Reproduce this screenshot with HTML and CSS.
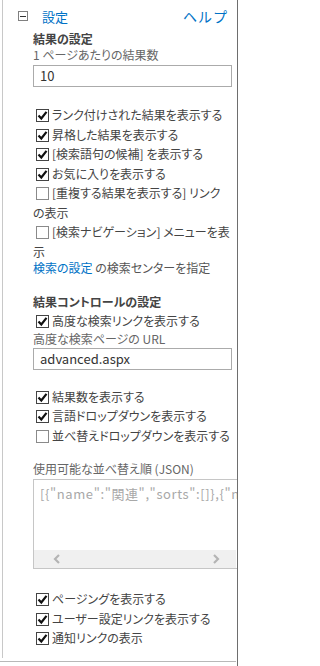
FILE: index.html
```html
<!DOCTYPE html>
<html lang="ja">
<head>
<meta charset="utf-8">
<title>設定</title>
<link rel="stylesheet" href="styles.css">
</head>
<body>
<div class="frame">
  <div class="main">
    <div class="panel">
      <div class="header">
        <span class="toggle"><span class="minus"></span></span>
        <a class="title">設定</a>
        <a class="help">ヘルプ</a>
      </div>
      <div class="section">
        <div class="heading">結果の設定</div>
        <div class="label">1 ページあたりの結果数</div>
        <div class="input">10</div>
        <div class="checks first">
          <div class="row"><span class="cb on"><svg viewBox="0 0 11 11"><path d="M1.5 5.5 L4.3 8.5 L9.5 1.8"/></svg></span>ランク付けされた結果を表示する</div>
          <div class="row"><span class="cb on"><svg viewBox="0 0 11 11"><path d="M1.5 5.5 L4.3 8.5 L9.5 1.8"/></svg></span>昇格した結果を表示する</div>
          <div class="row"><span class="cb on"><svg viewBox="0 0 11 11"><path d="M1.5 5.5 L4.3 8.5 L9.5 1.8"/></svg></span>[検索語句の候補] を表示する</div>
          <div class="row"><span class="cb on"><svg viewBox="0 0 11 11"><path d="M1.5 5.5 L4.3 8.5 L9.5 1.8"/></svg></span>お気に入りを表示する</div>
          <div class="row"><span class="cb"></span>[重複する結果を表示する] リンクの表示</div>
          <div class="row"><span class="cb"></span>[検索ナビゲーション] メニューを表示</div>
        </div>
        <div class="linkrow"><a class="link">検索の設定</a> の検索センターを指定</div>

        <div class="heading second">結果コントロールの設定</div>
        <div class="checks tight">
          <div class="row"><span class="cb on"><svg viewBox="0 0 11 11"><path d="M1.5 5.5 L4.3 8.5 L9.5 1.8"/></svg></span>高度な検索リンクを表示する</div>
        </div>
        <div class="label">高度な検索ページの URL</div>
        <div class="input url">advanced.aspx</div>
        <div class="checks mid">
          <div class="row"><span class="cb on"><svg viewBox="0 0 11 11"><path d="M1.5 5.5 L4.3 8.5 L9.5 1.8"/></svg></span>結果数を表示する</div>
          <div class="row"><span class="cb on"><svg viewBox="0 0 11 11"><path d="M1.5 5.5 L4.3 8.5 L9.5 1.8"/></svg></span>言語ドロップダウンを表示する</div>
          <div class="row"><span class="cb"></span>並べ替えドロップダウンを表示する</div>
        </div>
        <div class="label json-label">使用可能な並べ替え順 (JSON)</div>
        <div class="textarea">
          <div class="json">[{"name":"関連","sorts":[]},{"n</div>
          <div class="hscroll">
            <svg class="arrow left" viewBox="0 0 8 10"><path d="M6 1 L2 5 L6 9"/></svg>
            <svg class="arrow right" viewBox="0 0 8 10"><path d="M2 1 L6 5 L2 9"/></svg>
          </div>
        </div>
        <div class="checks last">
          <div class="row"><span class="cb on"><svg viewBox="0 0 11 11"><path d="M1.5 5.5 L4.3 8.5 L9.5 1.8"/></svg></span>ページングを表示する</div>
          <div class="row"><span class="cb on"><svg viewBox="0 0 11 11"><path d="M1.5 5.5 L4.3 8.5 L9.5 1.8"/></svg></span>ユーザー設定リンクを表示する</div>
          <div class="row"><span class="cb on"><svg viewBox="0 0 11 11"><path d="M1.5 5.5 L4.3 8.5 L9.5 1.8"/></svg></span>通知リンクの表示</div>
        </div>
      </div>
    </div>
    <div class="separator"></div>
  </div>
  <div class="edge"></div>
</div>
</body>
</html>
```
FILE: styles.css
```css
html, body {
  margin: 0;
  padding: 0;
  background: #fff;
}
body {
  font-family: "Noto Sans CJK JP", "Noto Sans", sans-serif;
  font-size: 12px;
  color: #444;
  font-feature-settings: "palt";
}
.frame {
  display: flex;
  width: 239px;
  height: 666px;
  overflow: hidden;
}
.main {
  width: 237px;
  overflow: hidden;
  display: flex;
  flex-direction: column;
}
.edge {
  width: 1px;
  background: #6e6e6e;
}
.panel {
  margin-left: 2px;
  border-left: 1px solid #c8c8c8;
  height: 658px;
  box-sizing: border-box;
}
.separator {
  margin-top: 3px;
  width: 236px;
  border-top: 1px solid #b8b8b8;
}
.header {
  display: flex;
  align-items: center;
  padding: 7px 10px 0 15px;
  height: 18px;
}
.toggle {
  width: 10px;
  height: 10px;
  box-sizing: border-box;
  border: 1px solid #808080;
  display: flex;
  align-items: center;
  justify-content: center;
}
.minus {
  width: 6px;
  height: 1px;
  background: #333;
}
.title {
  margin-left: 14px;
  color: #0072c6;
  font-size: 13px;
}
.help {
  margin-left: auto;
  color: #0072c6;
  font-size: 14px;
  font-feature-settings: normal;
  letter-spacing: 1px;
  margin-right: -1px;
}
.section {
  padding-left: 30px;
}
.heading {
  font-weight: bold;
  line-height: 16px;
  margin-top: 6px;
  color: #444;
}
.heading.second {
  margin-top: 19px;
}
.label {
  line-height: 16px;
  color: #666;
}
.input {
  margin-top: 2px;
  width: 199px;
  height: 22px;
  box-sizing: border-box;
  border: 1px solid #ababab;
  padding-left: 6px;
  font-size: 13px;
  line-height: 20px;
  color: #333;
}
.input.url {
  margin-top: 1px;
}
.checks {
  width: 197px;
  color: #444;
}
.checks.first { margin-top: 18px; }
.checks.tight { margin-top: 1px; }
.checks.mid { margin-top: 17px; }
.checks.last { margin-top: 20px; }
.row {
  line-height: 19.5px;
}
.cb {
  display: inline-block;
  vertical-align: -2px;
  width: 13px;
  height: 13px;
  box-sizing: border-box;
  border: 1px solid #8a8a8a;
  margin: 0 3px 0 3px;
  background: #fff;
}
.cb.on {
  border-color: #444;
}
.cb svg {
  display: block;
  width: 11px;
  height: 11px;
}
.cb path {
  fill: none;
  stroke: #111;
  stroke-width: 2.2;
}
.linkrow {
  line-height: 14px;
  color: #555;
}
.link {
  color: #0072c6;
}
.json-label {
  margin-top: 16px;
}
.textarea {
  margin-top: 2px;
  width: 215px;
  height: 90px;
  box-sizing: border-box;
  border: 1px solid #c6c6c6;
  overflow: hidden;
}
.json {
  height: 70px;
  box-sizing: border-box;
  white-space: nowrap;
  padding: 6px 0 0 6px;
  line-height: 16px;
  font-size: 13px;
  letter-spacing: 0.6px;
  color: #a8a8a8;
}
.hscroll {
  height: 18px;
  width: 202px;
  background: #f0f0f0;
  display: grid;
  grid-template-columns: 8px 1fr 8px;
  align-items: center;
  padding: 0 16px 0 19px;
  box-sizing: border-box;
}
.arrow {
  width: 8px;
  height: 10px;
  display: block;
}
.arrow.right {
  grid-column: 3;
}
.arrow path {
  fill: none;
  stroke: #b4b4b4;
  stroke-width: 2.2;
}
```
